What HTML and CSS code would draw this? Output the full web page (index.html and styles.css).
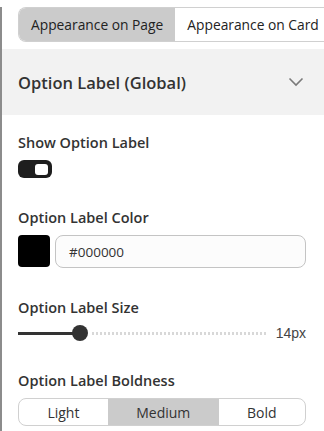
FILE: index.html
```html
<!DOCTYPE html>
<html lang="en">

<head>
    <meta charset="UTF-8">
    <meta name="viewport" content="width=device-width, initial-scale=1.0">
    <title>Option Label</title>
    <link rel="stylesheet" href="styles.css">
</head>

<body>
    <div class="panel">
        <div class="tabs">
            <span class="tab current">Appearance on Page</span>
            <span class="tab">Appearance on Card</span>
        </div>

        <div class="section_head">
            <span>Option Label (Global)</span>
            <svg class="chevron" width="16" height="10" viewBox="0 0 16 10">
                <path d="M1.5 1.5 L8 8 L14.5 1.5" fill="none" stroke="#7a7a7a" stroke-width="1.6" />
            </svg>
        </div>

        <div class="fields">
            <div class="field">
                <div class="label">Show Option Label</div>
                <span class="toggle"><span class="knob"></span></span>
            </div>

            <div class="field">
                <div class="label">Option Label Color</div>
                <div class="color_row">
                    <span class="swatch"></span>
                    <span class="color_input">#000000</span>
                </div>
            </div>

            <div class="field">
                <div class="label">Option Label Size</div>
                <div class="slider_row">
                    <div class="slider">
                        <span class="fill"></span>
                        <span class="thumb"></span>
                        <span class="rest"></span>
                    </div>
                    <span class="value">14px</span>
                </div>
            </div>

            <div class="field">
                <div class="label">Option Label Boldness</div>
                <div class="segments">
                    <span class="seg">Light</span>
                    <span class="seg current">Medium</span>
                    <span class="seg">Bold</span>
                </div>
            </div>
        </div>
    </div>
</body>

</html>
```

FILE: styles.css
```css
* {
    margin: 0;
    padding: 0;
    box-sizing: border-box;
}

body {
    font-family: "Open Sans", "Noto Sans", sans-serif;
    color: #2e2e2e;
    background: #fff;
    overflow: hidden;
}

.panel {
    border-left: 2px solid #8c8c8c;
    min-height: 431px;
}

.tabs {
    display: flex;
    margin: 7px 0 0 16px;
    height: 35px;
    border: 1px solid #d0d0d0;
    border-right: none;
    border-radius: 8px 0 0 8px;
    overflow: hidden;
    white-space: nowrap;
}

.tab {
    display: flex;
    align-items: center;
    padding: 0 12px;
    font-size: 13.8px;
    color: #222;
    background: #fff;
}

.tab.current {
    background: #cbcbcb;
}

.section_head {
    margin-top: 7px;
    height: 66px;
    background: #f2f2f2;
    display: flex;
    align-items: center;
    justify-content: space-between;
    padding: 0 20px 0 16px;
    font-size: 16.5px;
    font-weight: 600;
    color: #333;
}

.fields {
    display: flex;
    flex-direction: column;
    gap: 30px;
    padding: 18px 18px 0 16px;
}

.label {
    font-size: 14.5px;
    font-weight: 600;
    line-height: 20px;
    margin-bottom: 7px;
    color: #333;
}

.toggle {
    display: flex;
    justify-content: flex-end;
    align-items: center;
    width: 34px;
    height: 18px;
    padding: 0 4px;
    border-radius: 6px;
    background: #1e1e1e;
}

.knob {
    width: 13px;
    height: 11px;
    border-radius: 3px;
    background: #fff;
}

.color_row {
    display: flex;
    gap: 5px;
}

.swatch {
    width: 32px;
    height: 32px;
    border-radius: 4px;
    background: #000;
}

.color_input {
    flex: 1;
    height: 33px;
    display: flex;
    align-items: center;
    padding-left: 13px;
    border: 1px solid #c4c4c4;
    border-radius: 8px;
    font-size: 13.5px;
    color: #333;
    background: #fcfcfc;
}

.slider_row {
    display: flex;
    align-items: center;
    gap: 9px;
    height: 16px;
    margin-top: 1px;
}

.slider {
    flex: 1;
    display: flex;
    align-items: center;
}

.fill {
    width: 57px;
    height: 3px;
    background: #333;
}

.thumb {
    width: 16px;
    height: 16px;
    border-radius: 50%;
    background: #333;
    margin-left: -3px;
}

.rest {
    flex: 1;
    height: 3px;
    margin-left: 4px;
    background: repeating-linear-gradient(90deg, #d8d8d8 0 2px, transparent 2px 4px);
}

.value {
    font-family: "Liberation Sans", sans-serif;
    font-size: 14px;
    color: #444;
}

.segments {
    display: flex;
    height: 28px;
    border: 1px solid #d0d0d0;
    border-radius: 8px;
    overflow: hidden;
}

.seg {
    flex: 1 1 auto;
    display: flex;
    align-items: center;
    justify-content: center;
    font-size: 14px;
    color: #333;
}

.seg.current {
    background: #cbcbcb;
}
```
